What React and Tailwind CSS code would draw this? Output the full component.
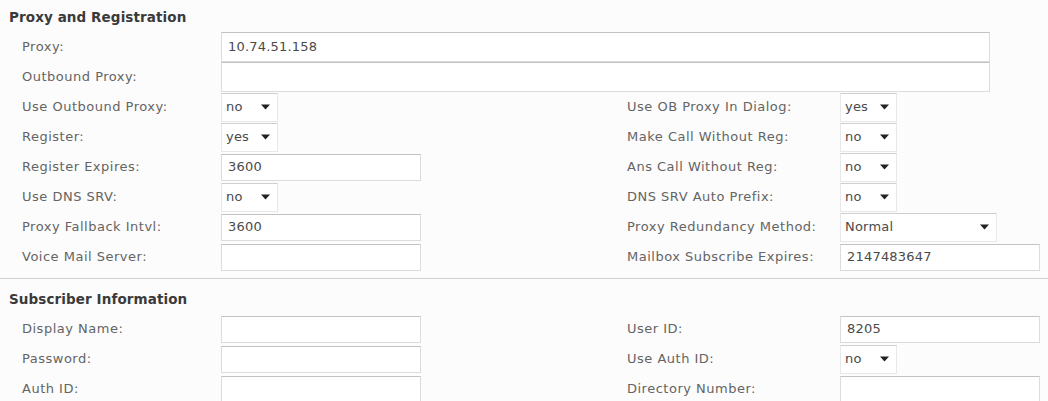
import React from "react";

const font = { fontFamily: '"DejaVu Sans", "Liberation Sans", sans-serif' };

function Label({ children }) {
  return (
    <div className="flex h-[30px] items-center whitespace-nowrap text-[13px] tracking-[0.5px] text-[#646464]">
      {children}
    </div>
  );
}

function Input({ value = "", w = "w-[200px]", h = "h-[27px]" }) {
  return (
    <div className="flex h-[30px] items-center">
      <div
        className={`flex ${h} ${w} items-center border border-[#dcdcdc] border-t-[#c2c2c2] bg-white px-[6px] text-[13px] tracking-[0.2px] text-[#4a4a4a]`}
      >
        {value}
      </div>
    </div>
  );
}

function Select({ value, w = "w-[57px]" }) {
  return (
    <div className="flex h-[30px] items-center">
      <div
        className={`flex h-[29px] ${w} items-center justify-between border border-[#e8e8e8] border-t-[#cfcfcf] bg-white pl-[4px] pr-[7px] text-[13px] tracking-[0.2px] text-[#4a4a4a]`}
      >
        <span>{value}</span>
        <svg width="9" height="6" viewBox="0 0 9 6">
          <path d="M0 0.5 L9 0.5 L4.5 5.5 Z" fill="#222" />
        </svg>
      </div>
    </div>
  );
}

function Heading({ children }) {
  return (
    <div className="flex h-[30px] items-center whitespace-nowrap pl-[9px] text-[13.5px] font-bold tracking-[0.1px] text-[#3a3a3a]">
      {children}
    </div>
  );
}

export default function App() {
  return (
    <div className="h-[401px] w-[1048px] overflow-hidden bg-[#fcfcfc]" style={font}>
      <div className="pt-[2px]">
        <Heading>Proxy and Registration</Heading>
      </div>
      <div className="grid grid-cols-[199px_406px_213px_1fr] pl-[22px]">
        <Label>Proxy:</Label>
        <div className="col-span-3">
          <Input value="10.74.51.158" w="w-[769px]" h="h-[30px]" />
        </div>
        <Label>Outbound Proxy:</Label>
        <div className="col-span-3">
          <Input w="w-[769px]" h="h-[30px]" />
        </div>

        <Label>Use Outbound Proxy:</Label>
        <Select value="no" />
        <Label>Use OB Proxy In Dialog:</Label>
        <Select value="yes" />

        <Label>Register:</Label>
        <Select value="yes" />
        <Label>Make Call Without Reg:</Label>
        <Select value="no" />

        <Label>Register Expires:</Label>
        <Input value="3600" />
        <Label>Ans Call Without Reg:</Label>
        <Select value="no" />

        <Label>Use DNS SRV:</Label>
        <Select value="no" />
        <Label>DNS SRV Auto Prefix:</Label>
        <Select value="no" />

        <Label>Proxy Fallback Intvl:</Label>
        <Input value="3600" />
        <Label>Proxy Redundancy Method:</Label>
        <Select value="Normal" w="w-[157px]" />

        <Label>Voice Mail Server:</Label>
        <Input />
        <Label>Mailbox Subscribe Expires:</Label>
        <Input value="2147483647" />
      </div>

      <div className="mt-[6px] h-px bg-[#d0d0d0]" />

      <div className="pt-[5px]">
        <Heading>Subscriber Information</Heading>
      </div>
      <div className="grid grid-cols-[199px_406px_213px_1fr] pl-[22px]">
        <Label>Display Name:</Label>
        <Input />
        <Label>User ID:</Label>
        <Input value="8205" />

        <Label>Password:</Label>
        <Input />
        <Label>Use Auth ID:</Label>
        <Select value="no" />

        <Label>Auth ID:</Label>
        <Input />
        <Label>Directory Number:</Label>
        <Input />
      </div>
    </div>
  );
}
